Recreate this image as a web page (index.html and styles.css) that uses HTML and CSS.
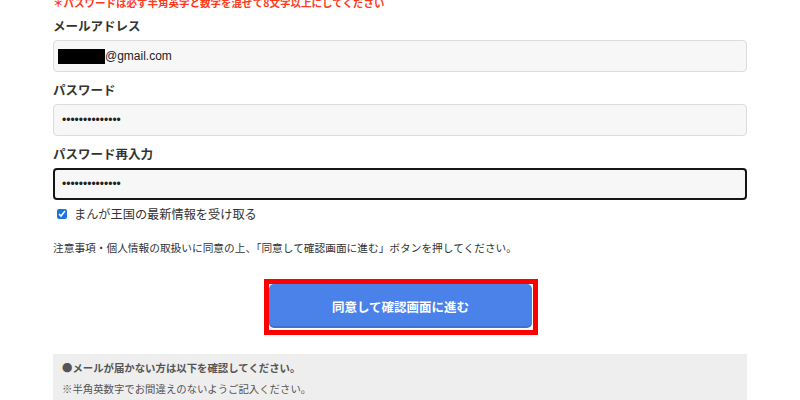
FILE: index.html
```html
<!DOCTYPE html>
<html lang="ja">
<head>
<meta charset="utf-8">
<link rel="stylesheet" href="styles.css">
</head>
<body>
<div class="form">
  <p class="warn">＊パスワードは必ず半角英字と数字を混ぜて8文字以上にしてください</p>

  <div class="label first">メールアドレス</div>
  <div class="field"><span class="redact"></span>@gmail.com</div>

  <div class="label">パスワード</div>
  <div class="field dots">••••••••••••••</div>

  <div class="label">パスワード再入力</div>
  <div class="field dots focus">••••••••••••••</div>

  <label class="check"><input type="checkbox" checked><span>まんが王国の最新情報を受け取る</span></label>

  <p class="notice">注意事項・個人情報の取扱いに同意の上、「同意して確認画面に進む」ボタンを押してください。</p>

  <div class="btn-wrap">
    <div class="highlight"><button class="submit" type="button">同意して確認画面に進む</button></div>
  </div>

  <div class="info">
    <p class="info-title">●メールが届かない方は以下を確認してください。</p>
    <p>※半角英数字でお間違えのないようご記入ください。</p>
    <p>※メールアドレスは正確にご入力ください。アドレスに間違いがある場合、登録用のメールが届きません。</p>
  </div>
</div>
</body>
</html>
```

FILE: styles.css
```css
* { box-sizing: border-box; }
html, body { margin: 0; padding: 0; background: #fff; overflow: hidden; }
body { font-family: "Noto Sans CJK JP", "Noto Sans", sans-serif; color: #333; }

.form {
  width: 694px;
  margin-left: 53px;
}

.warn {
  margin: -5px 0 0;
  font-size: 10.5px;
  line-height: 16px;
  color: #ff3b1f;
  font-weight: bold;
}

.label {
  font-size: 12.5px;
  line-height: 18px;
  font-weight: bold;
  color: #333;
  margin-top: 9px;
}
.label.first { margin-top: 6px; }

.field {
  margin-top: 5px;
  height: 32px;
  border: 1px solid #dcdcdc;
  border-radius: 4px;
  background: #f7f7f7;
  padding: 0 8px;
  display: flex;
  align-items: center;
  font-family: "Liberation Sans", Arial, sans-serif;
  font-size: 12px;
  color: #222;
}
.field.focus {
  border: 2px solid #161616;
  padding: 0 7px;
}
.dots { letter-spacing: 0; font-size: 12px; }

.redact {
  display: inline-block;
  width: 47px;
  height: 15px;
  background: #000;
  margin-left: -4px;
}

.check {
  display: flex;
  align-items: center;
  margin-top: 5px;
  height: 18px;
  font-size: 12.2px;
  line-height: 18px;
  color: #333;
}
.check input {
  width: 10px;
  height: 10px;
  margin: 0 7px 0 4px;
  accent-color: #1a73e8;
}

.notice {
  margin: 17px 0 0;
  font-size: 10.7px;
  line-height: 16px;
  color: #333;
}

.btn-wrap {
  display: flex;
  justify-content: center;
  margin-top: 23px;
  padding-left: 2px;
}
.highlight {
  border: 5px solid #ff0000;
  padding: 0 1px 2px 0;
  background: #fff;
}
.submit {
  display: block;
  width: 263px;
  height: 44px;
  border: none;
  border-radius: 5px;
  background: #4a82e9;
  box-shadow: inset 0 -2px 0 rgba(0, 0, 0, 0.12);
  color: #fff;
  font-family: "Noto Sans CJK JP", sans-serif;
  font-size: 12.5px;
  font-weight: bold;
  padding: 0;
}

.info {
  margin-top: 19px;
  background: #eeeeee;
  padding: 3px 9px 10px;
  color: #555;
  font-size: 10.4px;
  line-height: 21px;
}
.info p { margin: 0; }
.info-title { font-weight: bold; }
```
